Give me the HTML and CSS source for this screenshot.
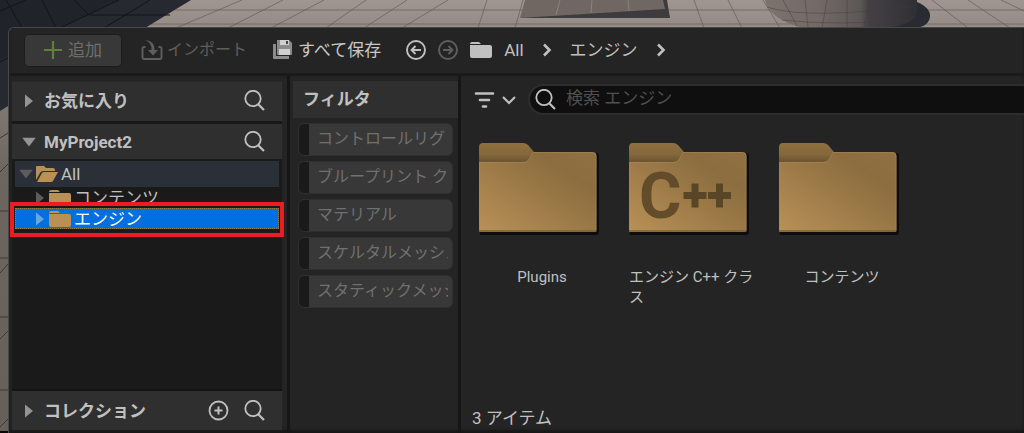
FILE: index.html
```html
<!DOCTYPE html>
<html lang="ja">
<head>
<meta charset="utf-8">
<title>コンテンツブラウザ</title>
<link rel="stylesheet" href="styles.css">
</head>
<body>
<svg class="symbols" aria-hidden="true">
  <defs>
    <linearGradient id="face" x1="0" y1="1" x2="1" y2="0"><stop offset="0" stop-color="#b99156"/><stop offset=".4" stop-color="#a07d4a"/><stop offset=".75" stop-color="#8b6d3f"/><stop offset="1" stop-color="#8f7142"/></linearGradient>
    <linearGradient id="tab" x1="0" y1="0" x2="0" y2="1"><stop offset="0" stop-color="#8f7040"/><stop offset=".5" stop-color="#84673b"/><stop offset="1" stop-color="#5f4a2b"/></linearGradient>
    <symbol id="search" viewBox="0 0 22 22"><circle cx="9" cy="8.500" r="7.700" fill="none" stroke="currentColor" stroke-width="1.800"/><path d="M14 14L20 20" stroke="currentColor" stroke-width="2.200"/></symbol>
    <symbol id="right" viewBox="0 0 10 14"><path d="M1 .5L9 7L1 13.500Z" fill="currentColor"/></symbol>
    <symbol id="down" viewBox="0 0 14 10"><path d="M.3 .8H13.700L7 9.500Z" fill="currentColor"/></symbol>
    <symbol id="folder" viewBox="0 0 22 18"><path d="M0 3Q0 1 2 1H9L11 3H0ZM0 4H20Q22 4 22 6V15Q22 17 20 17H2Q0 17 0 15Z" fill="currentColor"/></symbol>
    <symbol id="chevron" viewBox="0 0 10 14"><path d="M2 1.500L7.500 7L2 12.500" fill="none" stroke="currentColor" stroke-width="2.600"/></symbol>
    <symbol id="big-folder" viewBox="0 0 122 94">
      <path d="M2 6H50L57 11H118Q121 11 121 14V89Q121 93 118 93H2Z" fill="#0d0d0d"/>
      <path d="M1 24V5Q1 1 5 1H45Q48 1 50 3L56 10V24Z" fill="url(#tab)"/>
      <path d="M1 20H45Q49 20 51 17L55 10H114Q118.500 10 118.500 14V89Q118.500 90 117 90H2Q1 90 1 88Z" fill="url(#face)"/>
      <path d="M1.500 88V20.500H45Q49 20.500 51 17.500L55 10.500H114Q118 10.500 118 14V88" fill="none" stroke="#ad8957" stroke-opacity=".5"/>
      <path d="M1 89H118" stroke="#7e6033" stroke-width="1.500"/>
    </symbol>
  </defs>
</svg>

<svg class="scene" viewBox="0 0 1024 433" preserveAspectRatio="xMidYMin slice" aria-hidden="true">
  <defs>
    <linearGradient id="floor" x1="0" y1="0" x2="0" y2="1"><stop offset="0" stop-color="#a0958f"/><stop offset=".1" stop-color="#8f8681"/><stop offset=".4" stop-color="#6c6661"/><stop offset="1" stop-color="#66605b"/></linearGradient>
    <linearGradient id="drum" x1="0" y1="0" x2="1" y2="0"><stop offset="0" stop-color="#7c726e"/><stop offset=".35" stop-color="#736a67"/><stop offset=".63" stop-color="#5c5655"/><stop offset=".68" stop-color="#444145"/><stop offset="1" stop-color="#302f34"/></linearGradient>
  </defs>
  <rect width="1024" height="433" fill="url(#floor)"/>
  <path d="M242 0L176 28M283 0L228 28M324 0L271 28M366 0L326 28M407 0L364 28M448 0L402 28M487 0L478 28M523 0L515 28M694 0L704 28M728 0L742 28M763 0L780 28M932 0L968 28M968 0L1010 28M1001 0L1024 11M175 10H1024M150 24H1024" stroke="#5b5350" stroke-opacity=".6" fill="none"/>
  <path d="M0 0H191L145 28L8 106L0 111Z" fill="#262930"/>
  <path d="M0 0H118L60 28L0 60Z" fill="#20232a"/>
  <path d="M6 0L22 28M42 0L56 28M74 0L89 15M0 11L26 0M60 28L119 0M89 15H170M104 28L150 0M0 62L8 58" stroke="#12151a" fill="none"/>
  <path d="M0 138L8 133M0 211H8M0 172L8 164M0 258H8M0 273L8 264M0 317H8M0 339L8 331M0 390H8M0 427L8 419" stroke="#3c3835" fill="none"/>
  <path d="M520 18L525 0H665L670 18Z" fill="#716762"/>
  <path d="M520 18L665 9L663 0H667L670 18Z" fill="#3d3b3e"/>
  <path d="M560 0L556 15M592 0L591 13M628 0L629 11" stroke="#8d827c"/>
  <path d="M917 2Q931 8 930 17Q928 28 912 28H880Z" fill="#292b32"/>
  <path d="M765 0Q768 18 802 28H886Q914 25 917 12V0Z" fill="url(#drum)"/>
  <path d="M827 0L822 28M869 0L864 28M767 7Q805 20 916 6M782 20Q835 26 910 20M783 0L797 26M805 0L808 27M847 0V28M890 0L888 28" stroke="#413c3b" stroke-opacity=".45" fill="none"/>
  <rect y="431" width="1024" height="2" fill="#090808"/>
</svg>

<main class="browser">
  <header class="toolbar">
    <button class="add"><svg class="i18" viewBox="0 0 18 18"><path d="M9 0V18M0 9H18" stroke="#5d8138" stroke-width="2.200"/></svg>追加</button>
    <button class="tool import"><svg class="i22" viewBox="0 0 22 22"><path d="M4.500 8H3Q1.500 8 1.500 10V18Q1.500 20 3 20H19Q20.500 20 20.500 18V10Q20.500 8 19 8H17.500" fill="none" stroke="currentColor" stroke-width="1.900"/><path d="M4 1Q14 2 13.500 11H17L12 16.500L7 11H10.500Q11 4 4 1Z" fill="currentColor"/></svg>インポート</button>
    <button class="tool save"><svg class="i20" viewBox="0 0 20 20"><path d="M1 4H4V16H17V19H2Q1 19 1 18Z" fill="#8c8c8c"/><path d="M5 0H17L20 3V14Q20 15 19 15H6Q5 15 5 14Z" fill="#8c8c8c"/><path d="M8 0H17V5H8ZM7 9H18V15H7Z" fill="#d0d0d0"/><path d="M14 1H16V4H14Z" fill="#444"/></svg>すべて保存</button>
    <nav class="crumbs" aria-label="パス">
      <button class="round" aria-label="戻る"><svg class="i20" viewBox="0 0 20 20"><circle cx="10" cy="10" r="9" fill="none" stroke="currentColor" stroke-width="1.900"/><path d="M15 10H6M9.500 6L5.500 10L9.500 14" fill="none" stroke="currentColor" stroke-width="1.900"/></svg></button>
      <button class="round off" aria-label="進む"><svg class="i20" viewBox="0 0 20 20"><circle cx="10" cy="10" r="9" fill="none" stroke="currentColor" stroke-width="1.900"/><path d="M5 10H14M10.500 6L14.500 10L10.500 14" fill="none" stroke="currentColor" stroke-width="1.900"/></svg></button>
      <svg class="folder"><use href="#folder"/></svg>
      <a href="#">All</a><svg class="chev"><use href="#chevron"/></svg>
      <a href="#">エンジン</a><svg class="chev"><use href="#chevron"/></svg>
    </nav>
  </header>

  <div class="panes">
    <aside class="sources">
      <section class="head fav"><svg class="right"><use href="#right"/></svg><h2>お気に入り</h2><button class="icon" aria-label="お気に入りを検索"><svg class="i22"><use href="#search"/></svg></button></section>
      <section class="head proj"><svg class="down"><use href="#down"/></svg><h2>MyProject2</h2><button class="icon" aria-label="プロジェクトを検索"><svg class="i22"><use href="#search"/></svg></button></section>
      <ul class="tree">
        <li class="row root"><svg class="down"><use href="#down"/></svg><svg class="folder" viewBox="0 0 22 18"><path d="M0 15V2Q0 1 1 1H8L10 3H17Q19 3 19 5V6H7Q5 6 4 8Z M1 17L6 8Q6.500 7 8 7H22L17 16Q16.500 17 15 17Z" fill="currentColor"/></svg><span>All</span></li>
        <li class="row child"><svg class="right"><use href="#right"/></svg><svg class="folder"><use href="#folder"/></svg><span>コンテンツ</span></li>
        <li class="row child selected"><svg class="right"><use href="#right"/></svg><svg class="folder"><use href="#folder"/></svg><span>エンジン</span><i class="callout"></i></li>
      </ul>
      <section class="head coll"><svg class="right"><use href="#right"/></svg><h2>コレクション</h2><button class="icon" aria-label="コレクションを追加"><svg class="i22" viewBox="0 0 22 22"><circle cx="10.500" cy="10.500" r="9" fill="none" stroke="currentColor" stroke-width="1.800"/><path d="M10.500 6.500V14.500M6.500 10.500H14.500" stroke="currentColor" stroke-width="2"/></svg></button><button class="icon" aria-label="コレクションを検索"><svg class="i22"><use href="#search"/></svg></button></section>
    </aside>

    <section class="filters">
      <h2>フィルタ</h2>
      <div class="filter-list">
        <button class="filter"><span>コントロールリグ</span></button>
        <button class="filter"><span>ブループリント クラス</span></button>
        <button class="filter"><span>マテリアル</span></button>
        <button class="filter"><span>スケルタルメッシュ</span></button>
        <button class="filter"><span>スタティックメッシュ</span></button>
      </div>
    </section>

    <section class="assets">
      <div class="searchbar">
        <button class="sort" aria-label="フィルタを追加"><svg viewBox="0 0 42 18" class="sort-icon"><path d="M2 2.500H19M6 9H15M9 15.500H12" stroke="currentColor" stroke-width="2.600" stroke-linecap="round"/><path d="M29 6L35 12L41 6" fill="none" stroke="currentColor" stroke-width="2.200"/></svg></button>
        <label class="search"><svg class="i22"><use href="#search"/></svg><input type="search" aria-label="検索" placeholder="検索 エンジン"></label>
      </div>
      <div class="grid">
        <a class="tile" href="#"><svg class="big" viewBox="0 0 122 94"><use href="#big-folder"/></svg><span>Plugins</span></a>
        <a class="tile" href="#"><svg class="big" viewBox="0 0 122 94"><use href="#big-folder"/><text class="cpp" x="11" y="76">C</text><path d="M55.500 53.500H78.500M67 41.500V65.500M80 53.500H103M91.500 41.500V65.500" stroke="#594626" stroke-width="7"/></svg><span class="wrap">エンジン C++ クラス</span></a>
        <a class="tile" href="#"><svg class="big" viewBox="0 0 122 94"><use href="#big-folder"/></svg><span>コンテンツ</span></a>
      </div>
      <footer>3 アイテム</footer>
    </section>
  </div>
</main>
</body>
</html>
```
FILE: styles.css
```css
* { box-sizing: border-box; }
body {
  margin: 0;
  height: 100vh;
  overflow: hidden;
  padding: 27px 0 0 8px;
  color: #c0c0c0;
  font: 17px/24px Roboto, "Noto Sans CJK JP", sans-serif;
}
button { border: 0; padding: 0; background: none; color: inherit; font: inherit; }
a { color: inherit; text-decoration: none; }
h2 { margin: 0; font-size: 17px; line-height: 24px; font-weight: 700; color: #c0c0c0; }
svg { display: block; flex: none; }
.symbols { position: absolute; width: 0; height: 0; }
.scene { position: fixed; left: 0; top: 0; z-index: -1; width: 100%; height: 100%; }
.i18 { width: 18px; height: 18px; }
.i20 { width: 20px; height: 20px; }
.i22 { width: 22px; height: 22px; }
.folder { width: 22px; height: 18px; }
.right { width: 10px; height: 14px; color: #949494; }
.down { width: 14px; height: 10px; color: #949494; }

.browser {
  height: 100%;
  display: flex;
  flex-direction: column;
  background: #242424;
  border: 1px solid #484848;
  border-width: 1px 0 0 1px;
  border-top-left-radius: 6px;
  box-shadow: inset 0 -3px 3px #171717;
}
.toolbar {
  flex: none;
  display: flex;
  align-items: center;
  height: 48px;
  padding: 0 0 1px 15px;
  border-bottom: 3px solid #1a1a1a;
  white-space: nowrap;
}
.add {
  display: flex;
  align-items: center;
  justify-content: center;
  gap: 6px;
  width: 98px;
  height: 33px;
  border: 1px solid #1c1c1c;
  border-radius: 5px;
  background: #383838;
  color: #6e6e6e;
}
.tool { display: flex; align-items: center; gap: 4px; }
.import { margin-left: 19px; font-size: 16px; color: #5e5e5e; }
.save { margin-left: 25px; gap: 6px; color: #c8c8c8; }
.crumbs { display: flex; align-items: center; margin-left: 25px; gap: 12px; }
.chev { width: 10px; height: 14px; margin: 0 6px; }
.off { color: #5e5e5e; }

.panes { flex: 1; min-height: 0; display: grid; grid-template-columns: 281px 171px 1fr; }
.sources {
  display: flex;
  flex-direction: column;
  padding: 5px 5px 3px 3px;
  border-right: 3px solid #161616;
}
.head { flex: none; display: flex; align-items: center; padding: 0 16px 0 12px; background: #2f2f2f; }
.head h2 { flex: 1; margin-left: 10px; }
.head .down + h2 { margin-left: 8px; }
.head .icon + .icon { margin-left: 14px; }
.fav { height: 40px; padding-bottom: 2px; border-top: 1px solid #292929; }
.proj { height: 38px; padding-left: 10px; border-top: 3px solid #181818; }
.coll { height: 41px; border-top: 2px solid #141414; }
.tree { flex: 1; margin: 0; padding: 2px 3px; list-style: none; background: #1a1a1a; }
.row { display: flex; align-items: center; height: 21px; }
.row .folder { color: #b99156; }
.row .right, .row .down { color: #5c5c5c; }
.root { height: 26px; padding-left: 4px; gap: 3px; background: #2b3038; }
.child { padding-left: 20px; gap: 3px; }
.child .folder { margin-left: 1px; }
.selected { position: relative; background: #0070e0; color: #fff; outline: 1px dotted #8f7b45; outline-offset: -1px; }
.selected .right { color: #6aa5e0; }
.callout { position: absolute; inset: -6px -5px -8px; border: 4px solid #ed1c24; }

.filters { min-width: 0; padding: 5px 0 0 3px; border-right: 3px solid #161616; }
.filters h2 { height: 37px; padding: 6px 10px; background: #2f2f2f; }
.filter-list { display: grid; grid-template-columns: minmax(0, 1fr); gap: 5px; padding: 5px 5px 0; }
.filter {
  height: 33px;
  padding: 0 4px 1px 10px;
  border: 1px solid #2f2f2f;
  border-radius: 6px;
  background: linear-gradient(to right, #1a1a1a 10px, #383838 10px);
  color: #707070;
  font-size: 16px;
  text-align: left;
}
.filter span { display: block; margin-left: 8px; overflow: hidden; white-space: nowrap; }

.assets { display: flex; flex-direction: column; min-width: 0; padding: 8px 0 3px 11px; }
.searchbar { display: flex; align-items: center; gap: 12px; padding-left: 2px; }
.sort-icon { width: 42px; height: 18px; }
.search {
  flex: 1;
  display: flex;
  align-items: center;
  gap: 9px;
  height: 31px;
  padding-left: 5px;
  border: 2px solid #2d2d2d;
  border-right: 0;
  border-radius: 16px 0 0 16px;
  background: #0f0f0f;
}
.search input { flex: 1; min-width: 0; padding: 0 0 3px; border: 0; outline: 0; background: none; color: #c0c0c0; font: inherit; }
.search input::placeholder { color: #505050; opacity: 1; }
.grid { flex: 1; display: flex; gap: 22px; padding: 27px 0 0 6px; }
.tile { width: 128px; display: flex; flex-direction: column; align-items: center; gap: 31px; font-size: 15px; line-height: 20px; }
.big { align-self: flex-start; width: 122px; height: 94px; }
.wrap { align-self: stretch; padding-left: 1px; word-break: break-all; }
.cpp { font: 700 65px Roboto, sans-serif; fill: #624c2a; }
footer { flex: none; line-height: 24px; }
```
